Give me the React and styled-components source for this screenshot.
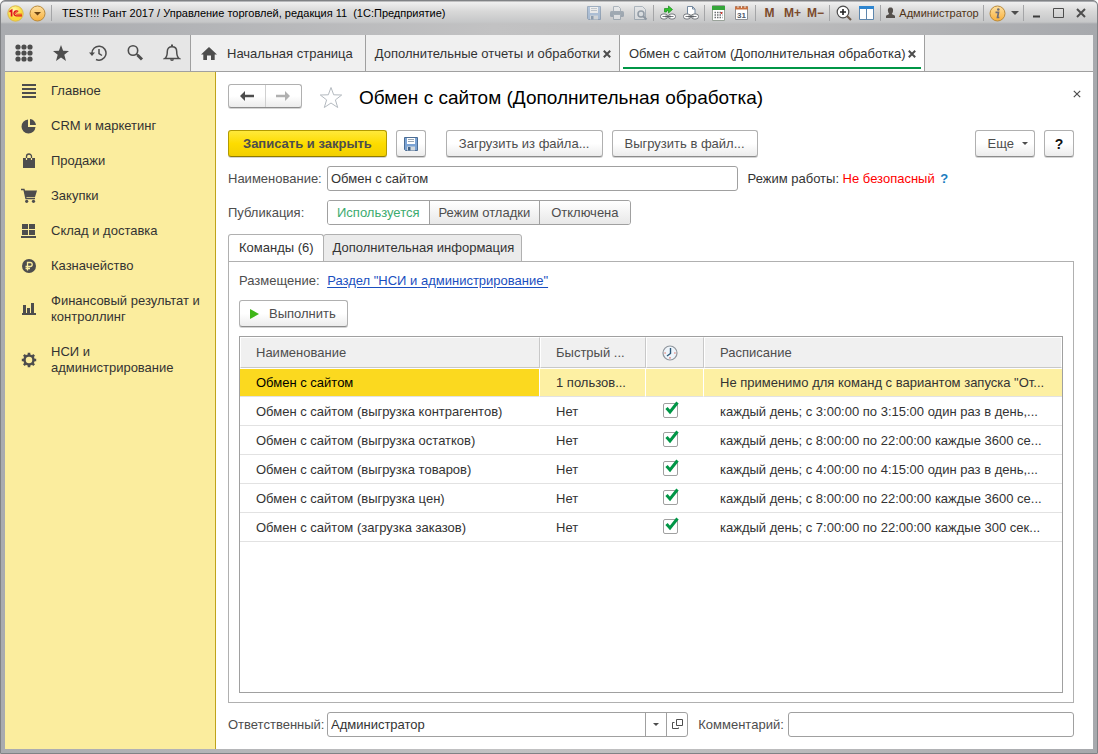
import React from "react";
import styled, { createGlobalStyle, css } from "styled-components";

const Global = createGlobalStyle`
  *, *::before, *::after { box-sizing: border-box; }
  body { margin: 0; background: #fff; }
  body, button, input { font: 13px/16px "Liberation Sans", Arial, sans-serif; color: #333; }
  button { margin: 0; padding: 0; border: 0; background: none; }
  a { color: inherit; text-decoration: none; }
`;

/* ---------- window frame ---------- */

const Window = styled.div`
  min-height: 100vh;
  display: flex;
  flex-direction: column;
  padding: 1px 4px 4px;
  border: 1px solid #808285;
  border-radius: 5px 5px 0 0;
  background: linear-gradient(90deg, #a9abaf, #c2c2c3 45%, #bcbcbd 70%, #a7a9ad);
`;

const TitleBar = styled.header`
  height: 33px;
  margin: 0 -4px;
  padding: 0 5px 11px 4px;
  display: flex;
  align-items: center;
  border-radius: 4px 4px 0 0;
  background: linear-gradient(#f0f0f0, #d9d9d9 9px, #c6c7c8 20px, transparent 22px);
`;

const WindowTitle = styled.h1`
  flex: 1;
  min-width: 0;
  margin: 0;
  padding-left: 8px;
  font-size: 11px;
  line-height: 16px;
  font-weight: 400;
  color: #000;
  white-space: pre;
`;

const TitleButton = styled.button`
  flex: none;
  width: ${(p) => p.$width || 23}px;
  height: 22px;
  display: flex;
  align-items: center;
  justify-content: center;
  opacity: ${(p) => (p.$dim ? 0.45 : 1)};
  font-size: 12px;
  font-weight: 700;
  color: #7b4a2c;
`;

const UserButton = styled.button`
  flex: none;
  width: 98px;
  display: flex;
  align-items: center;
  justify-content: center;
  gap: 3px;
  font-size: 11px;
  color: #4f3418;
`;

const Separator = styled.span`
  flex: none;
  width: 1px;
  height: 16px;
  margin: 0 2px;
  background: #a4a5a7;
`;

/* ---------- section bar ---------- */

const SectionBar = styled.div`
  height: 37px;
  display: flex;
  border-bottom: 1px solid #a0a0a0;
  background: #f0f0f0;
`;

const Tools = styled.div`
  display: flex;
  background: #e6e6e6;
  border-right: 1px solid #a0a0a0;
`;

const ToolButton = styled.button`
  width: 37px;
  display: flex;
  align-items: center;
  justify-content: center;
`;

const OpenTab = styled.div`
  display: flex;
  align-items: center;
  gap: 2px;
  padding: ${(p) => (p.$home ? "2px 12px 0 10px" : "2px 7px 0 9px")};
  border-right: 1px solid #a0a0a0;
  position: relative;
  background: ${(p) => (p.$active ? "#fff" : "#f0f0f0")};
  ${(p) =>
    p.$active &&
    css`
      &::after {
        content: "";
        position: absolute;
        left: 3px;
        right: 3px;
        bottom: 2px;
        height: 2px;
        background: #009646;
      }
    `}
`;

const TabLink = styled.a`
  display: flex;
  align-items: center;
  gap: 10px;
  white-space: nowrap;
`;

const CloseButton = styled.button`
  width: 10px;
  height: ${(p) => (p.$corner ? 20 : 10)}px;
  align-self: ${(p) => (p.$corner ? "flex-start" : "center")};
  display: flex;
  align-items: center;
  justify-content: center;
`;

/* ---------- body ---------- */

const Body = styled.div`
  flex: 1;
  display: flex;
  background: #fff;
`;

const Sidebar = styled.nav`
  flex: none;
  width: 211px;
  border-right: 1px solid #bfa31a;
  background: #fbed9e;
`;

const SidebarLink = styled.a`
  display: flex;
  align-items: center;
  gap: 14px;
  padding: 11px 12px 8px 16px;
`;

const SidebarIcon = styled.svg`
  flex: none;
  width: 16px;
  height: 16px;
`;

const Form = styled.main`
  flex: 1;
  min-width: 0;
  display: flex;
  flex-direction: column;
  padding: 12px 19px 12px 12px;
`;

const FormHeader = styled.div`
  height: 26px;
  margin-right: -8px;
  display: flex;
  align-items: center;
`;

const FormTitle = styled.h2`
  flex: 1;
  margin: 0;
  padding-top: 2px;
  font-size: 19px;
  line-height: 24px;
  font-weight: 400;
  color: #000;
`;

const raised = css`
  border: 1px solid #b0b0b0;
  border-bottom-color: #8c8c8c;
  border-radius: 3px;
  background: linear-gradient(#fff 50%, #ececec);
  box-shadow: 0 1px 0 #d4d4d4;
`;

const HistoryButtons = styled.div`
  ${raised}
  align-self: flex-start;
  width: 74px;
  height: 24px;
  display: flex;
`;

const HistoryButton = styled.button`
  flex: 1;
  display: flex;
  align-items: center;
  justify-content: center;
  & + & {
    border-left: 1px solid #d0d0d0;
  }
`;

const FavoriteButton = styled.button`
  width: 57px;
  display: flex;
  justify-content: center;
`;

const CommandBar = styled.div`
  display: flex;
  gap: 9px;
  margin-top: 20px;
`;

const Button = styled.button`
  ${raised}
  height: 27px;
  min-width: 30px;
  padding: 0 ${(p) => (p.$icon ? 6 : 12)}px;
  display: flex;
  align-items: center;
  justify-content: center;
  gap: 8px;
  white-space: nowrap;
  color: #4d4d4d;
  ${(p) =>
    p.$menu &&
    css`
      padding-right: 6px;
    `}
  ${(p) =>
    p.$run &&
    css`
      padding: 0 11px 0 10px;
      gap: 10px;
    `}
  ${(p) =>
    p.$primary &&
    css`
      padding: 0 14px;
      border-color: #b39b00;
      border-bottom-color: #8f7b00;
      background: linear-gradient(#ffe93b, #fddc00 50%, #f2cf00);
      font-weight: 700;
    `}
  ${(p) =>
    p.$strong &&
    css`
      font-size: 14px;
      font-weight: 700;
      color: #111;
    `}
`;

const Spacer = styled.span`
  flex: ${(p) => (p.$width ? `0 0 ${p.$width}px` : 1)};
`;

const Row = styled.div`
  display: flex;
  align-items: center;
  height: 25px;
  margin-top: 9px;
`;

const Label = styled.label`
  flex: none;
  width: ${(p) => (p.$auto ? "auto" : "99px")};
  color: #4d4d4d;
`;

const fieldBox = css`
  height: 25px;
  min-width: 0;
  border: 1px solid #a0a0a0;
  border-radius: 3px;
  background: #fff;
`;

const Field = styled.input`
  ${fieldBox}
  flex: ${(p) => p.$grow || 1} 1 0;
  padding: 0 4px 0 3px;
  outline: 0;
`;

const Combo = styled.div`
  ${fieldBox}
  flex: 359 1 0;
  display: flex;
`;

const ComboInput = styled.input`
  flex: 1;
  min-width: 0;
  padding: 0 3px;
  border: 0;
  outline: 0;
  background: none;
`;

const ComboButton = styled.button`
  width: 21px;
  border-left: 1px solid #a0a0a0;
  display: flex;
  align-items: center;
  justify-content: center;
`;

const Mode = styled.div`
  flex: 326 1 0;
  padding-left: 10px;
  white-space: nowrap;
`;

const Danger = styled.span`
  color: #ff0000;
`;

const HelpLink = styled.a`
  padding-left: 2px;
  font-weight: 700;
  color: #1a7dc0;
`;

const Segments = styled.div`
  display: flex;
  border: 1px solid #a0a0a0;
  border-radius: 3px;
  height: 25px;
  overflow: hidden;
`;

const Segment = styled.label`
  display: flex;
  align-items: center;
  padding: 0 9px;
  color: #4d4d4d;
  background: linear-gradient(#fff, #e8e8e8);
  & + & {
    border-left: 1px solid #a0a0a0;
  }
  &:last-child {
    padding: 0 11px;
  }
  &:has(input:checked) {
    background: #fff;
    color: #3cab6f;
  }
`;

const HiddenInput = styled.input`
  appearance: none;
  width: 0;
  height: 0;
  margin: 0;
`;

const PageTabs = styled.div`
  display: flex;
  margin: 9px 0 -1px;
`;

const PageTab = styled.button`
  height: 28px;
  padding: 0 7px 0 9px;
  border: 1px solid #b0b0b0;
  border-radius: 3px 3px 0 0;
  background: #ebebeb;
  & + & {
    margin-left: -1px;
  }
  ${(p) =>
    p.$active &&
    css`
      background: #fff;
      border-bottom-color: #fff;
      padding: 0 9px 0 10px;
    `}
`;

const Page = styled.section`
  flex: 1;
  display: flex;
  flex-direction: column;
  align-items: flex-start;
  padding: 11px 10px 9px;
  border: 1px solid #b0b0b0;
`;

const Placement = styled.div`
  margin-bottom: 11px;
  color: #4d4d4d;
`;

const BlueLink = styled.a`
  margin-left: 4px;
  color: #1a4fc0;
  text-decoration: underline;
  text-underline-offset: 2px;
`;

const TableBox = styled.div`
  flex: 1;
  align-self: stretch;
  margin-top: 9px;
  border: 1px solid #a0a0a0;
`;

const Table = styled.table`
  width: 100%;
  table-layout: fixed;
  border-collapse: separate;
  border-spacing: 0;
`;

const Col = styled.col`
  width: ${(p) => (p.$width ? `${p.$width}px` : "auto")};
`;

const HeadCell = styled.th`
  height: 31px;
  padding: 0 12px 0 15px;
  border: 1px solid #fff;
  border-right-color: #c8c8c8;
  border-bottom-color: #c8c8c8;
  background: #f0f0f0;
  font-weight: 400;
  color: #4d4d4d;
  text-align: left;
  white-space: nowrap;
  &:last-child {
    border-right-color: #fff;
  }
`;

const Cell = styled.td`
  height: 29px;
  padding: 1px 12px 0 16px;
  border-bottom: 1px solid #e2e2e2;
  white-space: nowrap;
  ${(p) =>
    p.$selected &&
    css`
      padding-top: 0;
      border-top: 1px solid #fff;
      border-right: 1px solid #fff;
      background: #fdf0a3;
      &:first-child {
        background: #fbd91f;
        color: #000;
      }
      &:last-child {
        border-right: 0;
      }
    `}
`;

const Check = styled.label`
  position: relative;
  display: block;
  width: 18px;
  height: 18px;
`;

const CheckBox = styled.input`
  appearance: none;
  display: block;
  width: 15px;
  height: 15px;
  margin: 0 0 0 1px;
  border: 1px solid #a0a0a0;
  border-radius: 2px;
  background: #fff;
`;

const CheckMark = styled.svg`
  position: absolute;
  left: 3px;
  top: -2px;
  pointer-events: none;
`;

const Footer = styled(Row)``;

/* ---------- drawings ---------- */

const DARK = "#4d4d4d";

const Cross = ({ size = 8, weight = 2 }) => (
  <svg width={size} height={size} viewBox="0 0 8 8">
    <path d="M.8.8l6.4 6.4M7.2.8L.8 7.2" stroke={DARK} strokeWidth={weight} />
  </svg>
);

const Caret = ({ width = 6, color = DARK }) => (
  <svg width={width} height={width / 2} viewBox="0 0 6 3">
    <path d="M0 0h6L3 3z" fill={color} />
  </svg>
);

const Logo = () => (
  <svg width="17" height="17" viewBox="0 0 17 17">
    <defs>
      <radialGradient id="logo" cx=".4" cy=".3">
        <stop offset="0" stopColor="#fffbb0" />
        <stop offset="1" stopColor="#fbd937" />
      </radialGradient>
    </defs>
    <circle cx="8.500" cy="8.500" r="7.700" fill="url(#logo)" stroke="#d9b84e" />
    <path d="M2.500 6.800L4.600 5.400V11.500" fill="none" stroke="#e0141c" strokeWidth="1.700" />
    <path d="M11.200 6.600A2.500 2.500 0 1 0 9.200 10.900H15" fill="none" stroke="#e0141c" strokeWidth="1.400" />
    <path d="M10.300 7.900A1 1 0 1 0 9.300 9.200H15" fill="none" stroke="#e0141c" strokeWidth=".8" />
  </svg>
);

const MenuBall = () => (
  <svg width="17" height="17" viewBox="0 0 17 17">
    <defs>
      <linearGradient id="ball" x2="0" y2="1">
        <stop offset="0" stopColor="#fde0a0" />
        <stop offset="1" stopColor="#f8b03c" />
      </linearGradient>
    </defs>
    <circle cx="8.500" cy="8.500" r="7.500" fill="url(#ball)" stroke="#b98a3c" />
    <path d="M5 7h7l-3.500 3.500z" fill="#6b4313" />
  </svg>
);

const InfoBall = () => (
  <svg width="17" height="17" viewBox="0 0 17 17">
    <circle cx="8.500" cy="8.500" r="7.500" fill="url(#ball)" stroke="#b98a3c" />
    <circle cx="9.300" cy="4.500" r="1.300" fill="#6d6d7a" />
    <path d="M6.500 7.300h3l-1 5.200h1.800" fill="none" stroke="#6d6d7a" strokeWidth="1.700" />
  </svg>
);

const Floppy = () => (
  <svg width="16" height="16" viewBox="0 0 16 16">
    <path d="M1.500 1.500h13v13h-12l-1-1z" fill="#7ba3d4" stroke="#4a6c94" />
    <path d="M4 2h8v6H4z" fill="#fff" />
    <path d="M5 3.500h6M5 5.500h6" stroke="#9aa7b4" />
    <path d="M4 10.500h8v4H4z" fill="#d3d9de" />
    <path d="M5 11h2.500v3.500H5z" fill="#3f6186" />
  </svg>
);

const Printer = () => (
  <svg width="16" height="16" viewBox="0 0 16 16">
    <path d="M4.500 6V1.500h5l2 2V6" fill="#eef1f4" stroke="#6b7e90" />
    <rect x="1" y="6" width="14" height="6" rx="1.500" fill="#5f7387" />
    <path d="M4.500 9.500h7v5h-7z" fill="#eef1f4" stroke="#6b7e90" />
  </svg>
);

const Preview = () => (
  <svg width="16" height="16" viewBox="0 0 16 16">
    <path d="M2.500 1.500h8l3 3v10h-11z" fill="#e6eaee" stroke="#6b7e90" />
    <circle cx="9" cy="9" r="3" fill="#dfe7ee" stroke="#41566b" strokeWidth="1.500" />
    <path d="M11 11l3.500 3.500" stroke="#41566b" strokeWidth="2" />
  </svg>
);

const Chain = () => (
  <g>
    <rect x=".5" y="9" width="7" height="5" rx="2.500" fill="#fff" stroke="#75797e" />
    <rect x="8.500" y="9" width="7" height="5" rx="2.500" fill="#fff" stroke="#75797e" />
    <path d="M2.500 11.500h3M10.500 11.500h3" stroke="#75797e" />
    <path d="M5 11.500h6" stroke="#5d6166" strokeWidth="1.500" />
  </g>
);

const LinkArrow = () => (
  <svg width="16" height="16" viewBox="0 0 16 16">
    <Chain />
    <path d="M4.500 7V3.500h4V1L12.500 4.500 8.500 8V5.700h-2V7z" fill="#2fc52b" stroke="#198a1d" strokeWidth=".7" />
  </svg>
);

const LinkPage = () => (
  <svg width="16" height="16" viewBox="0 0 16 16">
    <path d="M4.500 9V1.500h5L12 4v5" fill="#fff" stroke="#7489a0" />
    <path d="M9.500 1.500V4H12" fill="none" stroke="#7489a0" />
    <Chain />
  </svg>
);

const Calculator = () => (
  <svg width="15" height="16" viewBox="0 0 15 16">
    <path d="M1.500.5h12v15h-12z" fill="#fff" stroke="#9aa39a" />
    <path d="M1 1h13v4H1z" fill="#35a63a" />
    <path d="M3.500 7.500h8M3.500 10h8M3.500 12.500h8" stroke="#6c7072" strokeWidth="1.500" strokeDasharray="1.500 1" />
    <path d="M10.500 7v2" stroke="#d3372f" strokeWidth="1.500" />
  </svg>
);

const Calendar = () => (
  <svg width="15" height="16" viewBox="0 0 15 16">
    <path d="M1.500 1.500h12v13h-12z" fill="#fff" stroke="#8c8f94" />
    <path d="M1 1.500h13v3H1z" fill="#c9703f" />
    <path d="M4 0v3M7.500 0v3M11 0v3" stroke="#f3e3d6" />
    <text x="7.500" y="13" textAnchor="middle" fontSize="8" fontWeight="700" fill="#4c5a6c">31</text>
  </svg>
);

const ZoomIn = () => (
  <svg width="16" height="16" viewBox="0 0 16 16">
    <circle cx="7" cy="7" r="5.800" fill="#fff" stroke="#4d4d4d" strokeWidth="1.200" />
    <path d="M4 7h6M7 4v6" stroke="#222" strokeWidth="1.600" />
    <path d="M11 11l4 4" stroke="#6d5a4a" strokeWidth="2.200" />
  </svg>
);

const Panels = () => (
  <svg width="15" height="14" viewBox="0 0 15 14">
    <path d="M.5.5h14v13H.5z" fill="#fff" stroke="#5d86ad" />
    <path d="M0 0h15v3H0z" fill="#2f86d0" />
    <path d="M7.500 3v11" stroke="#5d86ad" />
  </svg>
);

const Person = () => (
  <svg width="11" height="12" viewBox="0 0 11 12">
    <path d="M5.500.5C8 .5 8.300 2.500 8 4.200 7.800 5.700 7 6.500 6.800 7L10 8.700V11H1V8.700L4.200 7C4 6.500 3.200 5.700 3 4.200 2.700 2.500 3 .5 5.500.5z" fill="#55504c" />
  </svg>
);

const Minimize = () => (
  <svg width="12" height="12"><path d="M2 9.500h7" stroke="#3c3c3c" strokeWidth="2" /></svg>
);
const Maximize = () => (
  <svg width="12" height="12"><path d="M.5 1.500h10v9H.5z" fill="none" stroke="#4d4d4d" /></svg>
);

const GridIcon = () => (
  <svg width="18" height="18" fill={DARK}>
    {[3, 9, 15].map((y) => [3, 9, 15].map((x) => <circle key={`${x}-${y}`} cx={x} cy={y} r="2.600" />))}
  </svg>
);
const StarIcon = () => (
  <svg width="18" height="18" viewBox="0 0 18 18">
    <path d="M9 1l2.100 5.800 5.900.2-4.700 3.700L14 17l-5-3.600L4 17l1.700-6.300L1 7l5.900-.2z" fill={DARK} />
  </svg>
);
const HistoryIcon = () => (
  <svg width="18" height="18" viewBox="0 0 18 18" fill="none" stroke={DARK} strokeWidth="1.500">
    <path d="M3 9.500A7 7 0 1 1 7 15.500" />
    <path d="M0 8.500h6L3 12z" fill={DARK} stroke="none" />
    <path d="M10 5v4.500l3 2" />
  </svg>
);
const SearchIcon = () => (
  <svg width="18" height="18" viewBox="0 0 18 18" fill="none" stroke={DARK}>
    <circle cx="7" cy="6.500" r="4.700" strokeWidth="1.600" />
    <path d="M10.500 10l1.500 1.500" strokeWidth="1.600" />
    <path d="M11.500 11l4.500 4.500" strokeWidth="3" />
  </svg>
);
const BellIcon = () => (
  <svg width="18" height="18" viewBox="0 0 18 18" fill="none" stroke={DARK} strokeWidth="1.500">
    <path d="M1.800 14.500C4 13 4.300 11 4.300 7.500 4.300 4.500 6 2.800 9 2.800s4.700 1.700 4.700 4.700c0 3.500.3 5.500 2.500 7z" />
    <path d="M9 .5v2" strokeWidth="2" />
    <path d="M7 15.300a2 1.800 0 0 0 4 0z" fill={DARK} stroke="none" />
  </svg>
);
const HomeIcon = () => (
  <svg width="16" height="14" viewBox="0 0 16 14">
    <path d="M8 0l8 7.500h-2.300V13H10V8.500H6V13H2.300V7.500H0z" fill={DARK} />
  </svg>
);

const Gear = () => (
  <g fill="none" stroke={DARK}>
    <circle cx="8" cy="8" r="4.500" strokeWidth="2.500" />
    <path d="M8 .8v2.700M8 12.500v2.700M.8 8h2.700M12.500 8h2.700M2.900 2.900l1.900 1.900M11.200 11.200l1.900 1.900M13.100 2.900l-1.900 1.900M4.800 11.200l-1.900 1.900" strokeWidth="2.600" />
  </g>
);

const sections = [
  ["Главное", <path d="M1 2h14M1 6h14M1 10h14M1 14h14" stroke={DARK} strokeWidth="2" />],
  ["CRM и маркетинг", <path d="M7 1.500V9h7.500A7 7 0 1 1 7 1.500zM9 1a6.500 6.500 0 0 1 6 6H9z" fill={DARK} />],
  ["Продажи", <><path d="M2 5h12v10H2z" fill={DARK} /><path d="M5.500 8V3.500a2.500 2.500 0 0 1 5 0V8" fill="none" stroke={DARK} strokeWidth="1.300" /><path d="M5.500 5v2M10.500 5v2" stroke="#fbed9e" strokeWidth="1.200" /></>],
  ["Закупки", <><path d="M0 1.500h3L5 10.500h9" fill="none" stroke={DARK} strokeWidth="1.400" /><path d="M3.200 2.500H16L14 9H4.800z" fill={DARK} /><circle cx="5.700" cy="13.300" r="1.600" fill={DARK} /><circle cx="12.500" cy="13.300" r="1.600" fill={DARK} /></>],
  ["Склад и доставка", <path d="M1 1h6v5H1zM8 1h6v5H8zM1 7h6v5H1zM8 7h6v5H8zM0 13h15v2H0z" fill={DARK} />],
  ["Казначейство", <><circle cx="8" cy="8" r="7" fill={DARK} /><path d="M6.500 12.500V4.500h2.700a2 2 0 0 1 0 4H4.500M4.500 10.500h4.500" fill="none" stroke="#fbed9e" strokeWidth="1.300" /></>],
  ["Финансовый результат и контроллинг", <path d="M2 4h3v8H2zM6 7h3v5H6zM10 2h3v10h-3zM1 12h14v2H1z" fill={DARK} />],
  ["НСИ и администрирование", <Gear />],
];

const FormStar = () => (
  <svg width="24" height="23" viewBox="0 0 24 23">
    <path d="M12 1.500l2.700 7.300 8 .2-6.300 4.900 2.300 7.600L12 17l-6.700 4.500 2.300-7.600L1.300 9l8-.2z" fill="#fff" stroke="#b4bac0" />
  </svg>
);

const Arrow = ({ flip, color }) => (
  <svg width="14" height="12" viewBox="0 0 14 12">
    <path
      d={flip ? "M14 6L9 1v3.700H0v2.600h9V11z" : "M0 6l5-5v3.700h9v2.600H5V11z"}
      fill={color}
    />
  </svg>
);

const Play = () => (
  <svg width="9" height="10" viewBox="0 0 9 10"><path d="M0 0l9 5-9 5z" fill="#3fb618" /></svg>
);

const ClockSvg = styled.svg`
  display: block;
`;

const Clock = () => (
  <ClockSvg width="16" height="16" viewBox="0 0 16 16" role="img" aria-label="По расписанию">
    <circle cx="8" cy="8" r="7" fill="#eef4fa" stroke="#8f959c" strokeWidth="1.200" />
    <path d="M8.500 3v5.500L5 11" fill="none" stroke="#2c5878" strokeWidth="1.400" />
    <path d="M2.500 8h1.200M12.300 8h1.200M8 12.300v1.200" stroke="#dc4633" strokeWidth="1.200" />
  </ClockSvg>
);

const OpenIcon = () => (
  <svg width="11" height="11" viewBox="0 0 11 11" fill="none" stroke={DARK}>
    <path d="M4.500.5h6v6h-6zM2.500 3.500h-2v6h6v-1" />
  </svg>
);

const rows = [
  ["Обмен с сайтом", "1 пользов...", false, "Не применимо для команд с вариантом запуска \"От..."],
  ["Обмен с сайтом (выгрузка контрагентов)", "Нет", true, "каждый день; с 3:00:00 по 3:15:00 один раз в день,..."],
  ["Обмен с сайтом (выгрузка остатков)", "Нет", true, "каждый день; с 8:00:00 по 22:00:00 каждые 3600 се..."],
  ["Обмен с сайтом (выгрузка товаров)", "Нет", true, "каждый день; с 4:00:00 по 4:15:00 один раз в день,..."],
  ["Обмен с сайтом (выгрузка цен)", "Нет", true, "каждый день; с 8:00:00 по 22:00:00 каждые 3600 се..."],
  ["Обмен с сайтом (загрузка заказов)", "Нет", true, "каждый день; с 7:00:00 по 22:00:00 каждые 300 сек..."],
];

const titleGroups = [
  [["Сохранить", <Floppy />, true], ["Печать", <Printer />, true], ["Просмотр", <Preview />, true]],
  [["Перейти по ссылке", <LinkArrow />], ["Получить ссылку", <LinkPage />]],
  [["Калькулятор", <Calculator />], ["Календарь", <Calendar />]],
  [["Запомнить", "M"], ["Прибавить", "M+"], ["Вычесть", "M−"]],
  [["Масштаб", <ZoomIn />], ["Панели", <Panels />]],
];

export default function App() {
  return (
    <Window>
      <Global />
      <TitleBar>
        <TitleButton $width={20} aria-label="Главное меню"><Logo /></TitleButton>
        <TitleButton $width={24} aria-label="Меню"><MenuBall /></TitleButton>
        <Separator />
        <WindowTitle>TEST!!! Рант 2017 / Управление торговлей, редакция 11  (1С:Предприятие)</WindowTitle>
        {titleGroups.map((group, i) => (
          <React.Fragment key={i}>
            {group.map(([name, icon, dim]) => (
              <TitleButton key={name} aria-label={name} $dim={dim}>{icon}</TitleButton>
            ))}
            <Separator />
          </React.Fragment>
        ))}
        <UserButton><Person />Администратор</UserButton>
        <Separator />
        <TitleButton aria-label="Информация"><InfoBall /></TitleButton>
        <TitleButton $width={12} aria-label="Ещё"><Caret width={8} /></TitleButton>
        <Separator />
        <TitleButton $width={22} aria-label="Свернуть"><Minimize /></TitleButton>
        <TitleButton $width={22} aria-label="Развернуть"><Maximize /></TitleButton>
        <TitleButton $width={22} aria-label="Закрыть окно"><Cross size={10} weight={1.6} /></TitleButton>
      </TitleBar>

      <SectionBar>
        <Tools>
          <ToolButton aria-label="Функции"><GridIcon /></ToolButton>
          <ToolButton aria-label="Избранное"><StarIcon /></ToolButton>
          <ToolButton aria-label="История"><HistoryIcon /></ToolButton>
          <ToolButton aria-label="Поиск"><SearchIcon /></ToolButton>
          <ToolButton aria-label="Уведомления"><BellIcon /></ToolButton>
        </Tools>
        <OpenTab $home>
          <TabLink href="#home"><HomeIcon />Начальная страница</TabLink>
        </OpenTab>
        <OpenTab>
          <TabLink href="#reports">Дополнительные отчеты и обработки</TabLink>
          <CloseButton aria-label="Закрыть вкладку"><Cross /></CloseButton>
        </OpenTab>
        <OpenTab $active>
          <TabLink href="#exchange">Обмен с сайтом (Дополнительная обработка)</TabLink>
          <CloseButton aria-label="Закрыть вкладку"><Cross /></CloseButton>
        </OpenTab>
      </SectionBar>

      <Body>
        <Sidebar>
          {sections.map(([name, icon]) => (
            <SidebarLink key={name} href="#section">
              <SidebarIcon viewBox="0 0 16 16">{icon}</SidebarIcon>
              <span>{name}</span>
            </SidebarLink>
          ))}
        </Sidebar>

        <Form>
          <FormHeader>
            <HistoryButtons>
              <HistoryButton aria-label="Назад"><Arrow color={DARK} /></HistoryButton>
              <HistoryButton aria-label="Вперед"><Arrow flip color="#b0b0b0" /></HistoryButton>
            </HistoryButtons>
            <FavoriteButton aria-label="В избранное"><FormStar /></FavoriteButton>
            <FormTitle>Обмен с сайтом (Дополнительная обработка)</FormTitle>
            <CloseButton $corner aria-label="Закрыть форму"><Cross weight={1.2} /></CloseButton>
          </FormHeader>

          <CommandBar>
            <Button $primary>Записать и закрыть</Button>
            <Button $icon aria-label="Записать"><Floppy /></Button>
            <Spacer $width={2} />
            <Button>Загрузить из файла...</Button>
            <Button>Выгрузить в файл...</Button>
            <Spacer />
            <Button $menu>Еще<Caret /></Button>
            <Button $icon $strong>?</Button>
          </CommandBar>

          <Row>
            <Label htmlFor="name">Наименование:</Label>
            <Field id="name" $grow={401} defaultValue="Обмен с сайтом" />
            <Mode>
              Режим работы: <Danger>Не безопасный</Danger> <HelpLink href="#help">?</HelpLink>
            </Mode>
          </Row>

          <Row>
            <Label as="span">Публикация:</Label>
            <Segments role="radiogroup" aria-label="Публикация">
              {["Используется", "Режим отладки", "Отключена"].map((name, i) => (
                <Segment key={name}>
                  <HiddenInput type="radio" name="publication" defaultChecked={i === 0} />
                  {name}
                </Segment>
              ))}
            </Segments>
          </Row>

          <PageTabs role="tablist">
            <PageTab role="tab" aria-selected="true" $active>Команды (6)</PageTab>
            <PageTab role="tab" aria-selected="false">Дополнительная информация</PageTab>
          </PageTabs>

          <Page role="tabpanel">
            <Placement>
              Размещение: <BlueLink href="#placement">Раздел "НСИ и администрирование"</BlueLink>
            </Placement>
            <Button $run><Play />Выполнить</Button>
            <TableBox>
              <Table>
                <colgroup>
                  <Col $width={300} />
                  <Col $width={106} />
                  <Col $width={58} />
                  <Col />
                </colgroup>
                <thead>
                  <tr>
                    <HeadCell>Наименование</HeadCell>
                    <HeadCell>Быстрый ...</HeadCell>
                    <HeadCell><Clock /></HeadCell>
                    <HeadCell>Расписание</HeadCell>
                  </tr>
                </thead>
                <tbody>
                  {rows.map(([name, quick, scheduled, schedule], i) => (
                    <tr key={name}>
                      <Cell $selected={i === 0}>{name}</Cell>
                      <Cell $selected={i === 0}>{quick}</Cell>
                      <Cell $selected={i === 0}>
                        {scheduled && (
                          <Check>
                            <CheckBox type="checkbox" defaultChecked aria-label={name} />
                            <CheckMark width="14" height="14" viewBox="0 0 14 14">
                              <path d="M1.500 7L5 11 12.500 1.500" fill="none" stroke="#009646" strokeWidth="3" />
                            </CheckMark>
                          </Check>
                        )}
                      </Cell>
                      <Cell $selected={i === 0}>{schedule}</Cell>
                    </tr>
                  ))}
                </tbody>
              </Table>
            </TableBox>
          </Page>

          <Footer>
            <Label htmlFor="owner">Ответственный:</Label>
            <Combo>
              <ComboInput id="owner" defaultValue="Администратор" />
              <ComboButton aria-label="Выбрать из списка"><Caret /></ComboButton>
              <ComboButton aria-label="Открыть"><OpenIcon /></ComboButton>
            </Combo>
            <Spacer $width={10} />
            <Label $auto htmlFor="comment">Комментарий:</Label>
            <Spacer $width={4} />
            <Field id="comment" $grow={277} />
          </Footer>
        </Form>
      </Body>
    </Window>
  );
}
